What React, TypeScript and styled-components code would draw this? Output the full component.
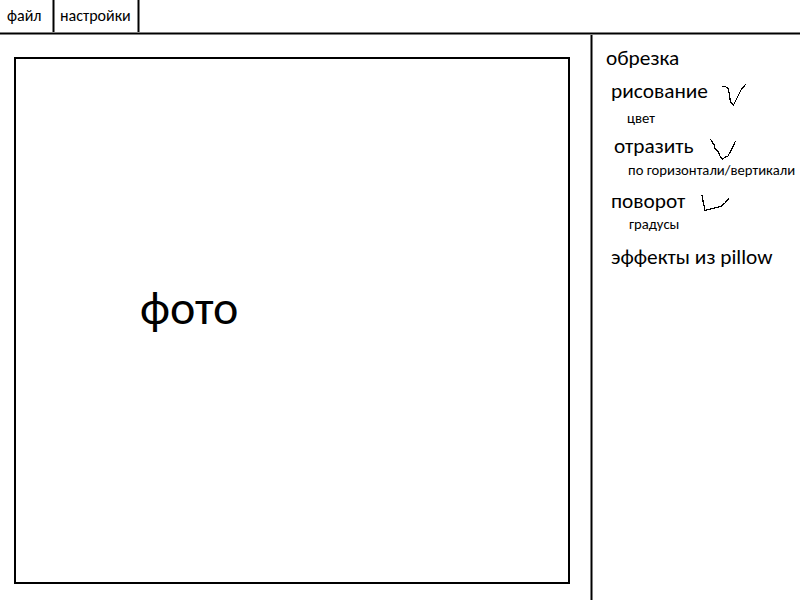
import React from "react";
import styled, { createGlobalStyle } from "styled-components";

const GlobalStyle = createGlobalStyle`
  * { box-sizing: border-box; }
  body { margin: 0; background: #fff; color: #000; font-family: Carlito, Lato, "Noto Sans", sans-serif; }
`;

const Page = styled.div`
  width: 800px;
  height: 600px;
  display: flex;
  flex-direction: column;
  overflow: hidden;
`;

const MenuBar = styled.nav`
  display: flex;
  height: 32px;
`;

const RuleX = styled.div`
  height: 3px;
  flex: none;
  background: #000;
  border: solid #7f7f7f;
  border-width: 1px 0;
`;

const RuleY = styled.div`
  width: 3px;
  flex: none;
  background: #000;
  border: solid #7f7f7f;
  border-width: 0 1px;
`;

const MenuItem = styled.div<{ $width: number; $pad: number }>`
  width: ${(p) => p.$width}px;
  padding-left: ${(p) => p.$pad}px;
`;

const Text = styled.span<{ $size: number; $line?: number }>`
  display: block;
  font-size: ${(p) => p.$size}px;
  line-height: ${(p) => p.$line ?? 30}px;
  white-space: nowrap;
`;

const Main = styled.main`
  display: flex;
  flex: 1;
`;

const CanvasArea = styled.section`
  width: 590px;
  padding: 22px 20px 16px 14px;
`;

const Photo = styled.div`
  height: 527px;
  border: 2px solid #000;
  padding: 233px 0 0 124px;
`;

const Tools = styled.aside`
  flex: 1;
  padding-top: 8px;
`;

const Row = styled.div<{ $height: number; $indent: number }>`
  display: flex;
  height: ${(p) => p.$height}px;
  padding-left: ${(p) => p.$indent}px;
`;

const LabelBox = styled.div<{ $width: number }>`
  width: ${(p) => p.$width}px;
`;

const Check = styled.svg<{ $top: number }>`
  flex: none;
  margin-top: ${(p) => p.$top}px;
  overflow: visible;
  fill: none;
  stroke: #000;
  stroke-width: 1.25;
  shape-rendering: crispEdges;
`;

const LARGE = 21.33;
const SMALL = 14.67;

export default function App() {
  return (
    <Page>
      <GlobalStyle />
      <MenuBar>
        <MenuItem $width={52} $pad={7}><Text $size={16} $line={32}>файл</Text></MenuItem>
        <RuleY />
        <MenuItem $width={82} $pad={5}><Text $size={16} $line={32}>настройки</Text></MenuItem>
        <RuleY />
      </MenuBar>
      <RuleX />
      <Main>
        <CanvasArea>
          <Photo><Text $size={48} $line={32}>фото</Text></Photo>
        </CanvasArea>
        <RuleY />
        <Tools>
          <Row $height={33} $indent={13}><Text $size={LARGE}>обрезка</Text></Row>
          <Row $height={27} $indent={18}>
            <LabelBox $width={111}><Text $size={LARGE}>рисование</Text></LabelBox>
            <Check $top={8} width="24" height="22"><path d="M0 2.500H3L6 4L7.500 11L8.500 18L11.500 21L15 14L19.500 5L24 0" /></Check>
          </Row>
          <Row $height={28} $indent={34}><Text $size={SMALL}>цвет</Text></Row>
          <Row $height={24} $indent={21}>
            <LabelBox $width={96}><Text $size={LARGE}>отразить</Text></LabelBox>
            <Check $top={8} width="26" height="21"><path d="M.5 0L3 4.500L4.500 6.500L5 9.500L8.500 13L10 17L12.500 20.500L14.500 18.500L18 17L22 9.500L25.500 2" /></Check>
          </Row>
          <Row $height={31} $indent={35}><Text $size={SMALL}>по горизонтали/вертикали</Text></Row>
          <Row $height={23} $indent={18}>
            <LabelBox $width={90}><Text $size={LARGE}>поворот</Text></LabelBox>
            <Check $top={9} width="28" height="16"><path d="M1 0L2 6L4 15.500L11 13.500L20 11.500L24 8L28 3" /></Check>
          </Row>
          <Row $height={33} $indent={36}><Text $size={SMALL}>градусы</Text></Row>
          <Row $height={32} $indent={18}><Text $size={LARGE}>эффекты из pillow</Text></Row>
        </Tools>
      </Main>
    </Page>
  );
}
